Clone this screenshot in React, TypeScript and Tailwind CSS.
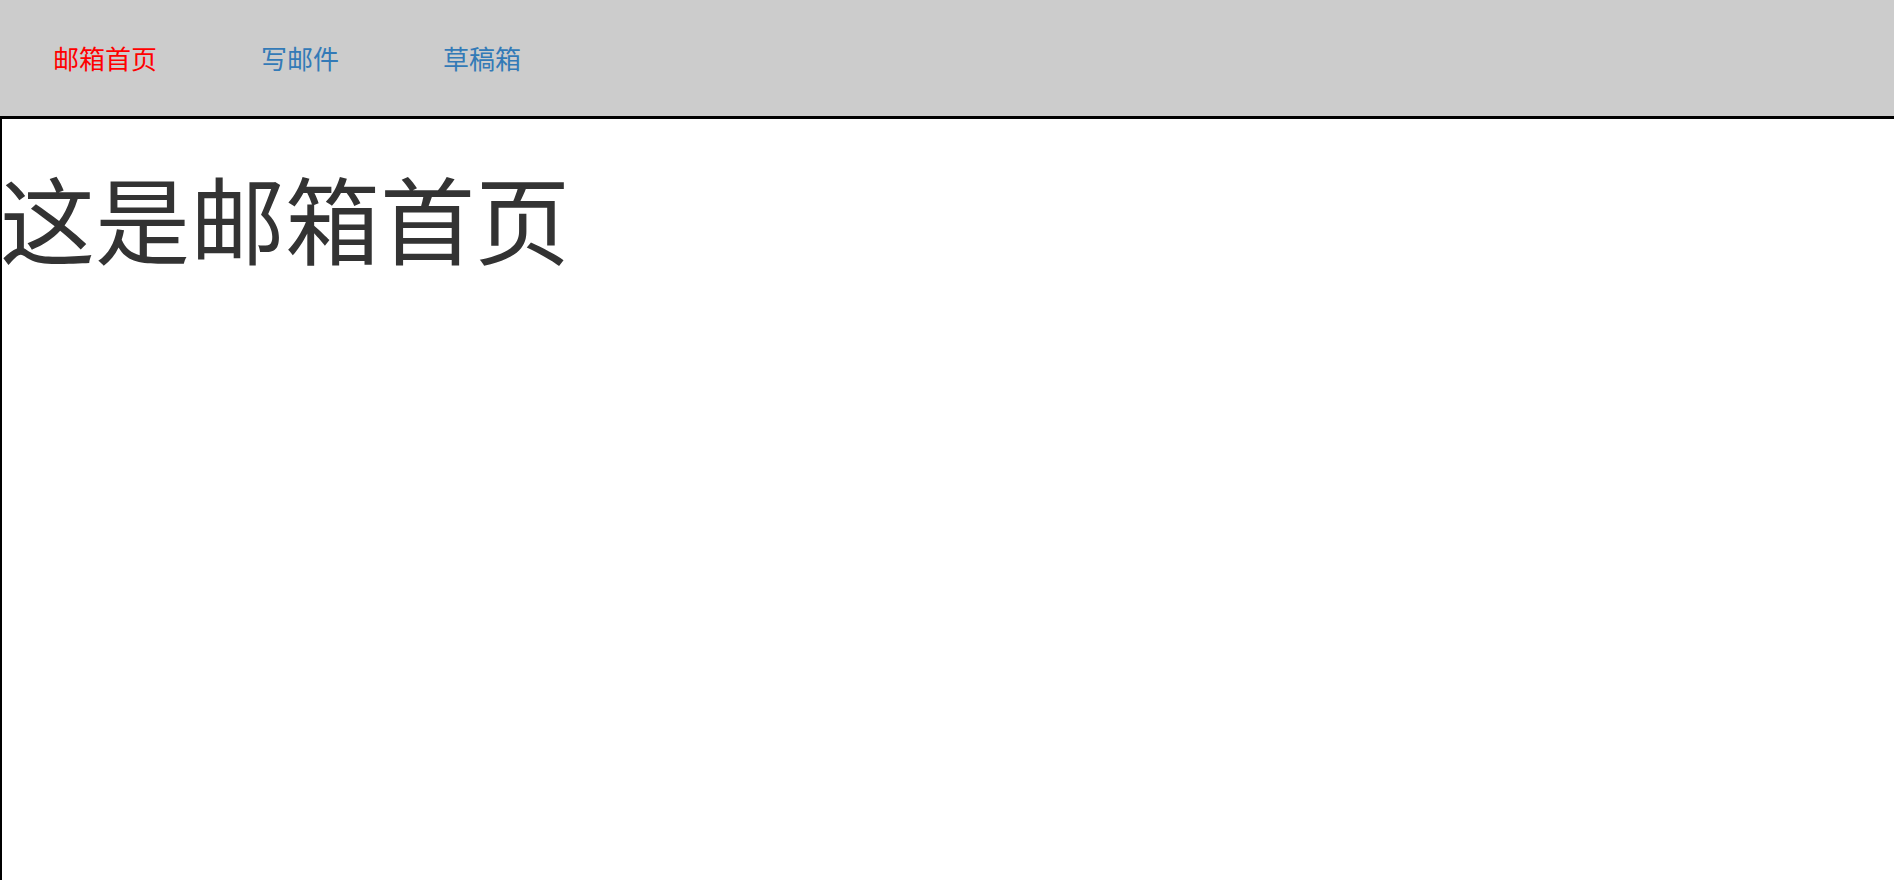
const links = [
  { label: '邮箱首页', active: true },
  { label: '写邮件', active: false },
  { label: '草稿箱', active: false },
];

export default function App() {
  return (
    <div className="min-h-[880px] bg-white font-['Noto_Sans_CJK_SC','Microsoft_YaHei',sans-serif]">
      {/* 顶部导航 */}
      <nav className="flex h-[116px] items-center bg-[#cccccc]">
        {links.map((l) => (
          <a
            key={l.label}
            href="#"
            className={
              'px-[52px] text-[26px] leading-none ' + (l.active ? 'ml-px text-[#ff0000]' : 'text-[#337ab7]')
            }
          >
            {l.label}
          </a>
        ))}
      </nav>

      {/* 内容区 */}
      <main className="min-h-[764px] border-l-2 border-t-[3px] border-black">
        <h1 className="-ml-0.5 mt-[46px] text-[95px] font-normal leading-[1.1] text-[#333333]">这是邮箱首页</h1>
      </main>
    </div>
  );
}
